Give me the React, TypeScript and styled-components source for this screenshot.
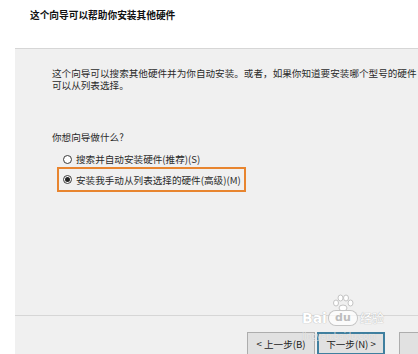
import styled, { createGlobalStyle } from "styled-components";

const GlobalStyle = createGlobalStyle`
  html, body {
    margin: 0;
    padding: 0;
    background: #ffffff;
  }
  body {
    font-family: "Noto Sans CJK SC", "Noto Sans", sans-serif;
    color: #222;
  }
`

const Page = styled.div`
  width: 418px;
  height: 354px;
  display: flex;
  flex-direction: column;
  overflow: hidden;
  position: relative;
`

const Header = styled.div`
  height: 48px;
  padding: 9px 0 0 30px;
  box-sizing: border-box;
  background: #ffffff;
`

const Title = styled.div`
  font-size: 9.7px;
  line-height: 12px;
  font-weight: bold;
  color: #111;
`

const Body = styled.div`
  flex: 1;
  display: flex;
`

const Gutter = styled.div`
  width: 15px;
  background: #ffffff;
`

const Panel = styled.div`
  flex: 1;
  display: flex;
  flex-direction: column;
  background: #f0f0f0;
  border-top: 1px solid #d6d6d6;
  min-width: 0;
`

const Content = styled.div`
  flex: 1;
  padding: 18px 0 0 37px;
  font-size: 9.6px;
  line-height: 12px;
`

const Paragraph = styled.p`
  margin: 0;
  width: 370px;
  color: #2a2a2a;
`

const Question = styled.p`
  margin: 40px 0 10px;
  color: #2a2a2a;
`

const Options = styled.div`
  display: flex;
  flex-direction: column;
  align-items: flex-start;
  gap: 2px;
  margin-left: 5px;
`

const Option = styled.label<{ $boxed?: boolean }>`
  display: inline-flex;
  align-items: center;
  gap: 4px;
  box-sizing: border-box;
  height: ${p => (p.$boxed ? "25px" : "12px")};
  padding: ${p => (p.$boxed ? "0 3px 0 4px" : "0 0 0 6px")};
  border: ${p => (p.$boxed ? "2px solid #e8852f" : "none")};
  color: #2a2a2a;
`

const Radio = styled.span<{ $checked?: boolean }>`
  width: 9px;
  height: 9px;
  box-sizing: border-box;
  border-radius: 50%;
  border: 1px solid #3a3a3a;
  background: #fff;
  display: flex;
  align-items: center;
  justify-content: center;
  &::after {
    content: "";
    width: 5px;
    height: 5px;
    border-radius: 50%;
    background: ${p => (p.$checked ? "#222" : "transparent")};
  }
`

const Footer = styled.div`
  height: 39px;
  border-top: 1px solid #d6d6d6;
  box-sizing: border-box;
  display: flex;
  padding: 16px 0 0 232px;
  overflow: hidden;
`

const Button = styled.button<{ $focused?: boolean }>`
  width: 68px;
  height: 23px;
  box-sizing: border-box;
  margin-right: 2px;
  background: #e1e1e1;
  border: ${p => (p.$focused ? "2px solid #3f7f9f" : "1px solid #adadad")};
  font-family: inherit;
  font-size: 9.6px;
  color: #222;
  padding: 0;
  flex-shrink: 0;
`

const Cancel = styled(Button)`
  margin-left: 12px;
`

const Watermark = styled.div`
  position: absolute;
  left: 300px;
  top: 294px;
  width: 100px;
  height: 50px;
  pointer-events: none;
  color: #fff;
  font-family: "DejaVu Sans", sans-serif;
  text-shadow: 0 0 1px #b8b8b8, 0 0 1px #b8b8b8;
`

const Brand = styled.div`
  position: absolute;
  top: 17px;
  left: 2px;
  display: flex;
  align-items: center;
  font-size: 14px;
  font-weight: bold;
  line-height: 14px;
`

const Du = styled.span`
  margin-left: 2px;
  width: 28px;
  height: 14px;
  border-radius: 7px;
  background: rgba(255, 255, 255, 0.7);
  box-shadow: 0 0 0 1px #c4c4c4;
  color: #bdbdbd;
  text-shadow: none;
  font-size: 11px;
  display: flex;
  align-items: center;
  justify-content: center;
`

const Jingyan = styled.span`
  margin-left: 3px;
  font-family: "Noto Sans CJK SC", sans-serif;
  font-size: 12px;
  font-weight: normal;
`

const Url = styled.div`
  position: absolute;
  top: 38px;
  left: 2px;
  font-size: 8px;
  color: rgba(255, 255, 255, 0.6);
  text-shadow: 0 0 1px rgba(170, 170, 170, 0.6);
`

function Paw() {
  return (
    <svg width="22" height="18" viewBox="0 0 22 18" style={{ position: "absolute", left: 32, top: 0 }}>
      <g fill="#fff" stroke="#c4c4c4" strokeWidth="1">
        <ellipse cx="4" cy="9" rx="2.5" ry="3" />
        <ellipse cx="8.5" cy="4" rx="2.5" ry="3" />
        <ellipse cx="14" cy="4" rx="2.5" ry="3" />
        <ellipse cx="18.5" cy="9" rx="2.5" ry="3" />
        <ellipse cx="11" cy="14" rx="4" ry="3" />
      </g>
    </svg>
  );
}

export default function App() {
  return (
    <Page>
      <GlobalStyle />
      <Header>
        <Title>这个向导可以帮助你安装其他硬件</Title>
      </Header>
      <Body>
        <Gutter />
        <Panel>
          <Content>
            <Paragraph>
              这个向导可以搜索其他硬件并为你自动安装。或者，如果你知道要安装哪个型号的硬件可以从列表选择。
            </Paragraph>
            <Question>你想向导做什么?</Question>
            <Options>
              <Option>
                <Radio />
                搜索并自动安装硬件(推荐)(S)
              </Option>
              <Option $boxed>
                <Radio $checked />
                安装我手动从列表选择的硬件(高级)(M)
              </Option>
            </Options>
          </Content>
          <Footer>
            <Button>&lt; 上一步(B)</Button>
            <Button $focused>下一步(N) &gt;</Button>
            <Cancel aria-label="取消" />
          </Footer>
        </Panel>
      </Body>
      <Watermark>
        <Paw />
        <Brand>
          Bai<Du>du</Du><Jingyan>经验</Jingyan>
        </Brand>
        <Url>jingyan.baidu.com</Url>
      </Watermark>
    </Page>
  );
}
